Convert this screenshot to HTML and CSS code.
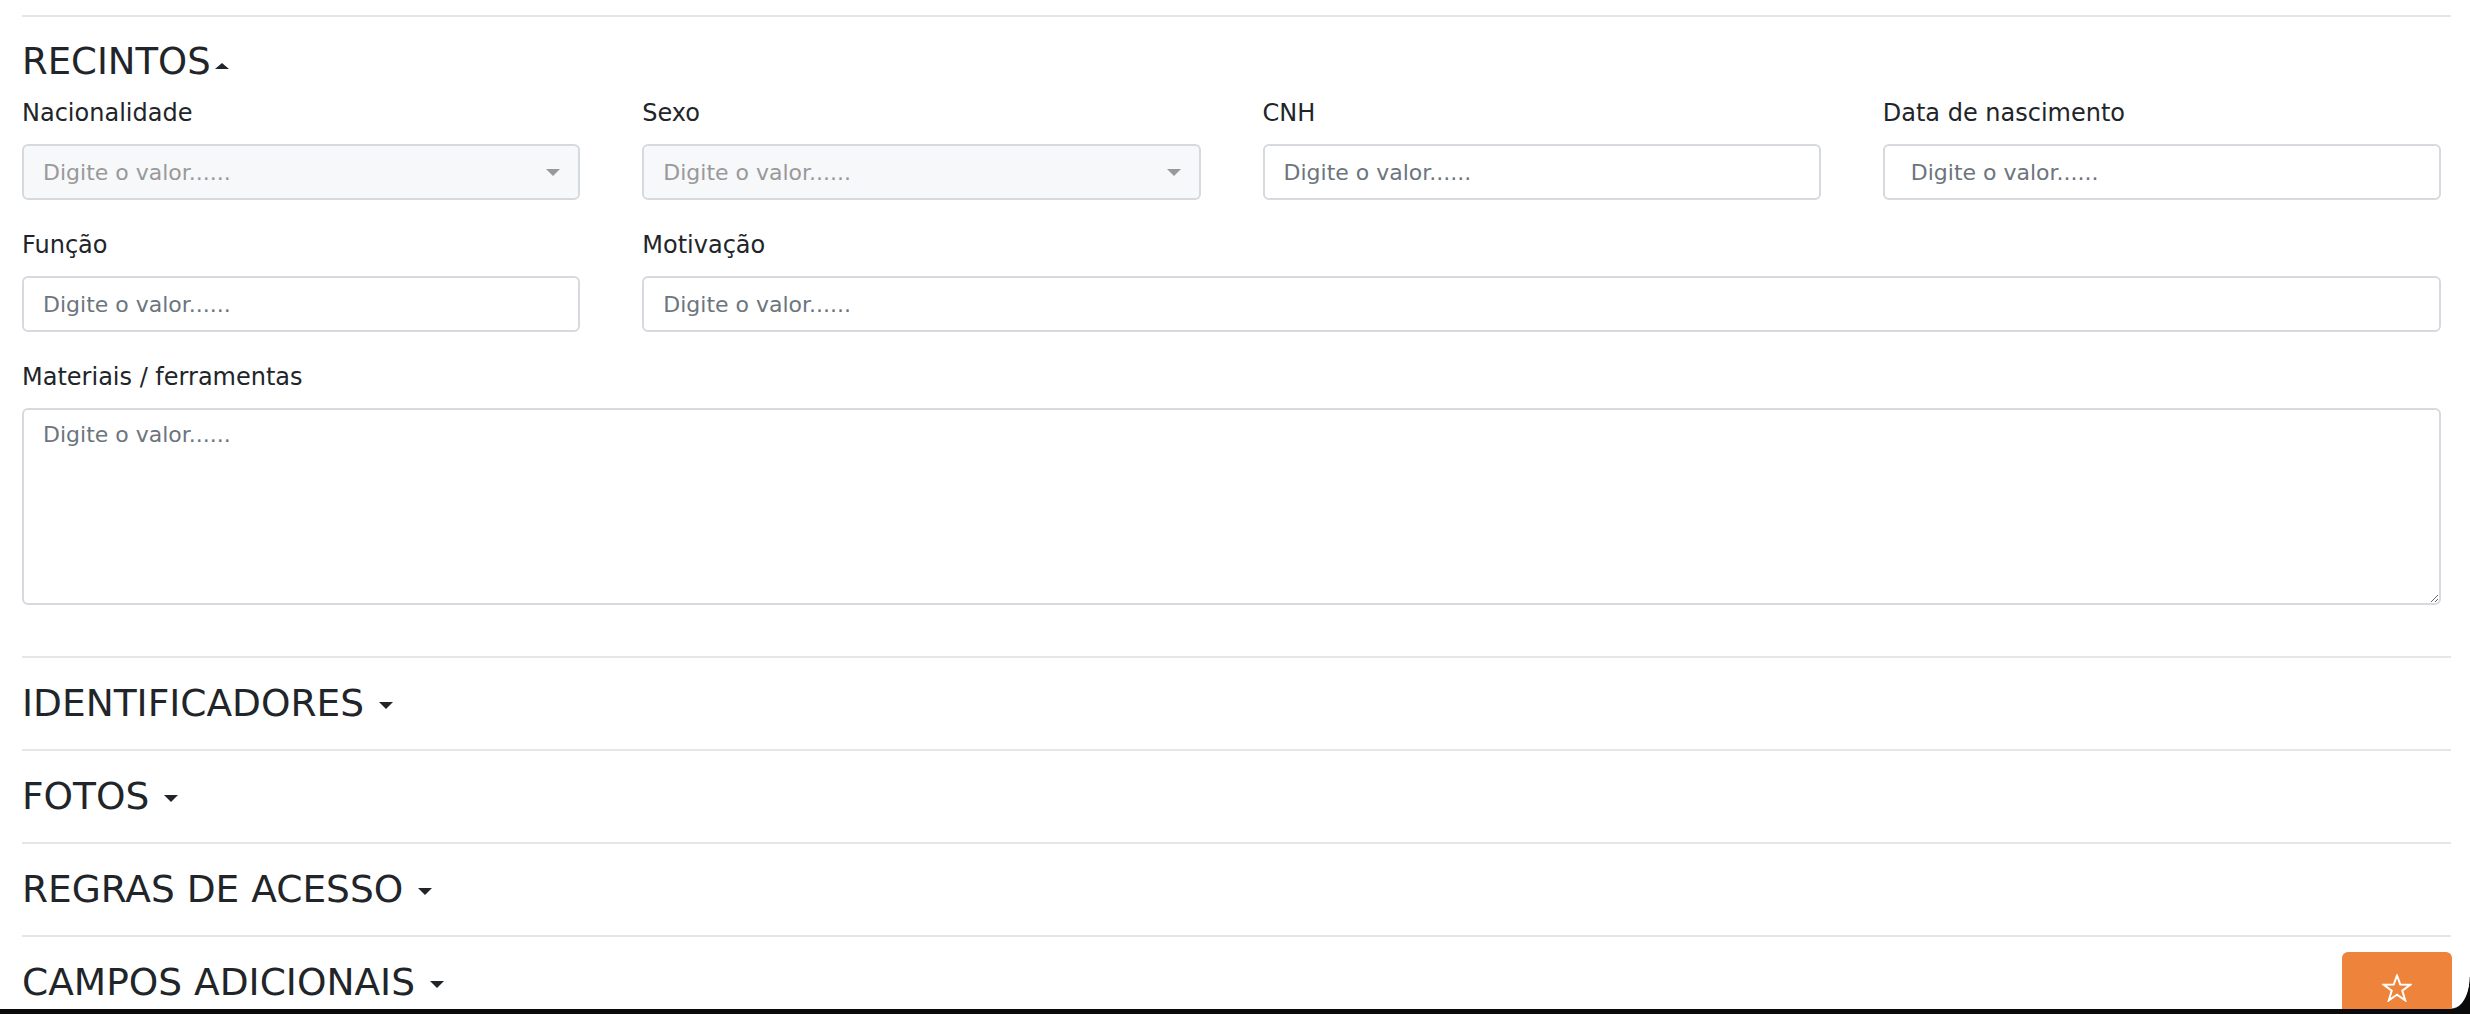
FILE: index.html
```html
<!DOCTYPE html>
<html lang="pt-BR">
<head>
    <meta charset="UTF-8">
    <meta name="viewport" content="width=device-width, initial-scale=1.0">
    <title>Cadastro | Recintos</title>
    <link rel="stylesheet" href="styles.css">
</head>
<body>
    <div class="page">
        <div class="divider"></div>

        <section class="section open">
            <h4 class="section-title">RECINTOS<span class="caret caret-up"></span></h4>
            <div class="form-grid">
                <div class="field">
                    <label>Nacionalidade</label>
                    <div class="select-box">
                        <span class="select-placeholder">Digite o valor......</span>
                        <span class="select-caret"></span>
                    </div>
                </div>
                <div class="field">
                    <label>Sexo</label>
                    <div class="select-box">
                        <span class="select-placeholder">Digite o valor......</span>
                        <span class="select-caret"></span>
                    </div>
                </div>
                <div class="field">
                    <label>CNH</label>
                    <input type="text" class="form-control" placeholder="Digite o valor......">
                </div>
                <div class="field">
                    <label>Data de nascimento</label>
                    <input type="text" class="form-control date-input" placeholder="Digite o valor......">
                </div>
                <div class="field">
                    <label>Função</label>
                    <input type="text" class="form-control" placeholder="Digite o valor......">
                </div>
                <div class="field span-3">
                    <label>Motivação</label>
                    <input type="text" class="form-control" placeholder="Digite o valor......">
                </div>
                <div class="field span-4">
                    <label>Materiais / ferramentas</label>
                    <textarea class="form-control textarea" placeholder="Digite o valor......"></textarea>
                </div>
            </div>
        </section>

        <div class="divider"></div>
        <section class="section">
            <h4 class="section-title">IDENTIFICADORES <span class="caret"></span></h4>
        </section>

        <div class="divider"></div>
        <section class="section">
            <h4 class="section-title">FOTOS <span class="caret"></span></h4>
        </section>

        <div class="divider"></div>
        <section class="section">
            <h4 class="section-title">REGRAS DE ACESSO <span class="caret"></span></h4>
        </section>

        <div class="divider"></div>
        <section class="section">
            <h4 class="section-title">CAMPOS ADICIONAIS <span class="caret"></span></h4>
        </section>
    </div>

    <button class="fav-btn" type="button" aria-label="Favoritar">
        <svg width="30" height="28" viewBox="0 0 30 28">
            <polygon points="15,1.5 18.3,10.5 28.3,10.7 20.3,16.7 23.2,26.3 15,20.6 6.8,26.3 9.7,16.7 1.7,10.7 11.7,10.5" fill="none" stroke="#fff" stroke-width="2" stroke-linejoin="miter"/>
        </svg>
    </button>

    <div class="frame-bottom"></div>
    <div class="frame-corner"></div>
</body>
</html>
```

FILE: styles.css
```css
body {
    margin: 0;
    padding: 0;
    font-family: 'DejaVu Sans', 'Liberation Sans', sans-serif;
    background-color: #fff;
    color: #212529;
    overflow: hidden;
}
.page {
    padding: 15px 19px 0 22px;
}
.divider {
    height: 2px;
    background-color: #e6e6e6;
}
.section-title {
    margin: 0;
    font-size: 37.5px;
    font-weight: 400;
    line-height: 91px;
    color: #212529;
    white-space: nowrap;
}
.section.open {
    padding-bottom: 51px;
}
.section.open .section-title {
    margin-top: 23px;
    font-size: 37px;
    line-height: 44px;
}
.caret {
    display: inline-block;
    width: 0;
    height: 0;
    margin-left: 3px;
    border-top: 7px solid #212529;
    border-left: 7px solid transparent;
    border-right: 7px solid transparent;
    vertical-align: middle;
}
.caret-up {
    border-top: none;
    border-bottom: 6px solid #212529;
    margin-left: 4px;
    vertical-align: 5px;
}
.form-grid {
    margin-top: 15px;
    margin-right: 10px;
    display: grid;
    grid-template-columns: repeat(4, 1fr);
    column-gap: 62px;
    row-gap: 31px;
}
.span-3 {
    grid-column: span 3;
}
.span-4 {
    grid-column: span 4;
}
.field label {
    display: block;
    font-size: 24px;
    line-height: 29px;
    margin-bottom: 16px;
    color: #212529;
}
.form-control,
.select-box {
    display: block;
    width: 100%;
    height: 56px;
    box-sizing: border-box;
    padding: 0 19px;
    border: 2px solid #d6dade;
    border-radius: 6px;
    background-color: #fff;
    font-family: inherit;
    font-size: 22px;
    color: #495057;
    outline: none;
}
.form-control::placeholder {
    color: #6c757d;
}
.date-input {
    margin-top: 2px;
    padding-left: 26px;
}
.textarea {
    height: 197px;
    padding: 8px 19px;
    line-height: 1.5;
    resize: vertical;
}
.select-box {
    display: flex;
    align-items: center;
    justify-content: space-between;
    background-color: #f7f8fa;
    padding-right: 18px;
}
.select-placeholder {
    color: #999;
}
.select-caret {
    width: 0;
    height: 0;
    border-top: 7px solid #999;
    border-left: 7px solid transparent;
    border-right: 7px solid transparent;
}
.fav-btn {
    position: fixed;
    right: 18px;
    bottom: -18px;
    width: 110px;
    height: 80px;
    padding: 22px 0 0;
    border: none;
    border-radius: 6px;
    background-color: #ee833b;
    display: flex;
    justify-content: center;
    align-items: flex-start;
    cursor: pointer;
}
.frame-bottom {
    position: fixed;
    left: 0;
    right: 0;
    bottom: 0;
    height: 5px;
    background-color: #0a0a0a;
}
.frame-corner {
    position: fixed;
    right: 0;
    bottom: 5px;
    width: 18px;
    height: 32px;
    background: radial-gradient(ellipse 18px 32px at 0 0, transparent 96%, #0a0a0a 100%);
}
```
